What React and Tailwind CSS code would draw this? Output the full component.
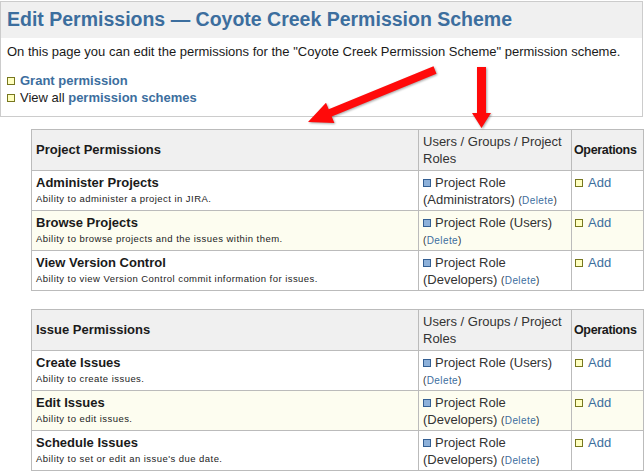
import React from 'react';

const projectPerms = [
    { name: 'Administer Projects', desc: 'Ability to administer a project in JIRA.', role: 'Project Role (Administrators)' },
    { name: 'Browse Projects', desc: 'Ability to browse projects and the issues within them.', role: 'Project Role (Users)' },
    { name: 'View Version Control', desc: 'Ability to view Version Control commit information for issues.', role: 'Project Role (Developers)' },
];

const issuePerms = [
    { name: 'Create Issues', desc: 'Ability to create issues.', role: 'Project Role (Users)' },
    { name: 'Edit Issues', desc: 'Ability to edit issues.', role: 'Project Role (Developers)' },
    { name: 'Schedule Issues', desc: "Ability to set or edit an issue's due date.", role: 'Project Role (Developers)' },
];

const YellowBullet = () => (
    <span className="inline-block w-[8px] h-[8px] border border-[#77771f] bg-[#ffffc0] mr-[5px] align-[0px]" />
);

const BlueBullet = () => (
    <span className="inline-block w-[8px] h-[8px] border border-[#335f93] bg-[#8db1da] mr-[4px] align-[0px]" />
);

function PermTable({ title, rows }) {
    return (
        <table className="ml-[31px] w-[612px] border-collapse table-fixed text-[13px] text-[#1a1a1a]">
            <colgroup>
                <col className="w-[387px]" />
                <col className="w-[153px]" />
                <col className="w-[72px]" />
            </colgroup>
            <thead>
                <tr className="h-[41px] bg-[#f0f0f0]">
                    <th className="border border-[#bbbbbb] px-[4px] text-left font-bold">{title}</th>
                    <th className="border border-[#bbbbbb] px-[4px] text-left font-normal leading-[17px] text-[#333]">Users / Groups / Project Roles</th>
                    <th className="border border-[#bbbbbb] px-[2px] text-left font-bold text-[12.5px] tracking-[-0.35px]">Operations</th>
                </tr>
            </thead>
            <tbody>
                {rows.map((r, i) => (
                    <tr key={r.name} className={i === 1 ? 'h-[40px] bg-[#fdfdf0]' : 'h-[40px] bg-white'}>
                        <td className="border border-[#bbbbbb] px-[4px] pt-[3px] align-top">
                            <div className="font-bold leading-[17px]">{r.name}</div>
                            <div className="text-[9.5px] tracking-[0.45px] leading-[16px] text-[#222]">{r.desc}</div>
                        </td>
                        <td className="border border-[#bbbbbb] px-[4px] pt-[3px] align-top leading-[17px] text-[#333]">
                            <BlueBullet />{r.role}{' '}
                            <span className="text-[10px] leading-[14px] tracking-[0.4px]">(<a className="text-[#3c6e9e]">Delete</a>)</span>
                        </td>
                        <td className="border border-[#bbbbbb] px-[3px] pt-[3px] align-top leading-[17px]">
                            <YellowBullet /><a className="text-[#3c6e9e]">Add</a>
                        </td>
                    </tr>
                ))}
            </tbody>
        </table>
    );
}

export default function App() {
    return (
        <div className="relative w-[644px] h-[472px] overflow-hidden bg-white" style={{ fontFamily: '"Liberation Sans", Arial, sans-serif' }}>
            <div className="mt-[1px] w-[643px] border border-[#cccccc] h-[116px]">
                <div className="h-[36px] bg-[#f0f0f0] px-[6px] flex items-center">
                    <h1 className="text-[19.5px] font-bold text-[#3c6e9e]">Edit Permissions — Coyote Creek Permission Scheme</h1>
                </div>
                <div className="px-[6px] pt-[5px] text-[13px] text-[#1a1a1a]">
                    <p className="leading-[17px]">On this page you can edit the permissions for the "Coyote Creek Permission Scheme" permission scheme.</p>
                    <ul className="mt-[12px] leading-[17px]">
                        <li><YellowBullet /><a className="font-bold text-[#3c6e9e]">Grant permission</a></li>
                        <li><YellowBullet />View all <a className="font-bold text-[#3c6e9e]">permission schemes</a></li>
                    </ul>
                </div>
            </div>

            <div className="mt-[12px]">
                <PermTable title="Project Permissions" rows={projectPerms} />
            </div>
            <div className="mt-[18px]">
                <PermTable title="Issue Permissions" rows={issuePerms} />
            </div>

            <svg className="absolute left-0 top-0 pointer-events-none" width="644" height="472">
                <g fill="#ff0a0a" style={{ filter: 'drop-shadow(1px 1px 1px rgba(0,0,0,0.35))' }}>
                    <polygon points="433.5,66.3 436.5,73.7 331.7,116.6 334.4,123.1 308,122 326,102.7 328.7,109.2" />
                    <polygon points="477,67 486,67 486,113 491,113 481.5,128 472,113 477,113" />
                </g>
            </svg>
        </div>
    );
}
